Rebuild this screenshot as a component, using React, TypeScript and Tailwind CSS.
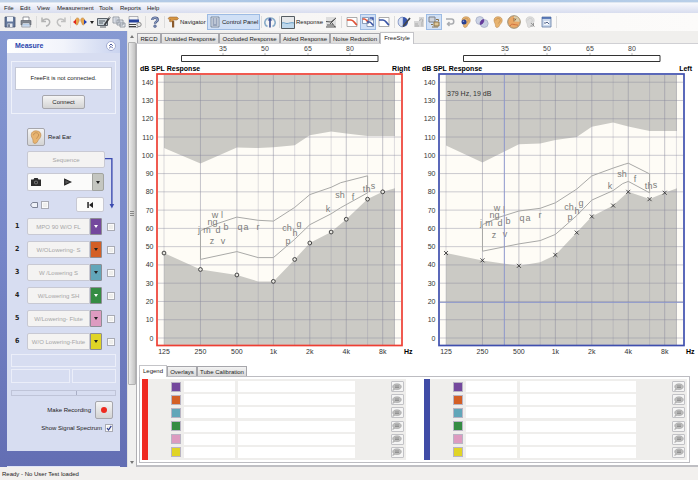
import type { ReactNode } from "react";

/* ---------- shared data ---------- */

const MENUS = [
  { name: "File", width: "w-4" },
  { name: "Edit", width: "w-[17px]" },
  { name: "View", width: "w-5" },
  { name: "Measurement", width: "w-[42px]" },
  { name: "Tools", width: "w-[21px]" },
  { name: "Reports", width: "w-[27px]" },
  { name: "Help", width: "w-5" },
];

const TESTS = [
  { name: "MPO 90 W/O FL", color: "bg-[#74489d]", light: true },
  { name: "W/OLowering- S", color: "bg-[#d35f26]", light: false },
  { name: "W /Lowering S", color: "bg-[#62a6b9]", light: false },
  { name: "W/Lowering SH", color: "bg-[#358c43]", light: true },
  { name: "W/Lowering- Flute", color: "bg-[#dd9bc0]", light: false },
  { name: "W/O Lowering-Flute", color: "bg-[#e0d426]", light: false },
];

/* ---------- toolbar ---------- */

function Tool({ label, children, active, width = "w-4" }: { label: string; children: ReactNode; active?: boolean; width?: string }) {
  return (
    <button
      aria-label={label}
      className={`${width} flex h-4 shrink-0 items-center justify-center border ${
        active ? "border-[#9dbbe3] bg-[#d0e0f6]" : "border-transparent"
      }`}
    >
      {children}
    </button>
  );
}

function Sep({ width = "w-1" }: { width?: string }) {
  return (
    <span className={`${width} flex h-3 shrink-0 justify-center`}>
      <span className="w-px bg-[#dcdcdc]" />
    </span>
  );
}

function Glyph({ children, wide }: { children: ReactNode; wide?: boolean }) {
  return (
    <svg viewBox={wide ? "0 0 14 12" : "0 0 12 12"} className={wide ? "h-3 w-3.5 shrink-0" : "h-3 w-3 shrink-0"} fill="none">
      {children}
    </svg>
  );
}

function EarShape({ fill = "#e8b470", stroke = "#b5834a" }: { fill?: string; stroke?: string }) {
  return (
    <>
      <path d="M2 5C1.6 1.8 4 .6 6.2.7 9 .8 10.5 2.5 10.2 5c-.3 2-1.8 2.8-2.6 4.3C7 10.7 6.3 11.5 5 11.5c-1.5 0-1.6-1.5-1.6-2.6C3.4 7.500 2.200 6.600 2 5Z" fill={fill} stroke={stroke} strokeWidth=".5" />
      <path d="M3.8 4.500C4 2.800 5.300 2.300 6.400 2.400c1.500.1 2.200 1.400 1.700 2.700-.4 1-1.300 1.300-1.700 2.400" stroke={stroke} strokeWidth=".6" />
    </>
  );
}

function Toolbar() {
  return (
    <div className="flex h-[18px] items-center bg-gradient-to-r from-[#f0efee] via-[#f8f7f6] to-[#fcfbfa] pl-0.5">
      <Tool label="Save">
        <Glyph>
          <path d="M1 1h9.500l.5.5V11H1Z" fill="#64789c" stroke="#46536e" strokeWidth=".8" />
          <path d="M3 1h6v4.500H3Z" fill="#eef2f8" />
          <path d="M3.500 7.500h5V11h-5Z" fill="#e6e9ef" />
          <path d="M4.300 8.300h1.400V11H4.300Z" fill="#46536e" />
        </Glyph>
      </Tool>
      <Tool label="Print">
        <Glyph>
          <path d="M3 1h6v4H3Z" fill="#fff" stroke="#6b6f76" strokeWidth=".7" />
          <path d="M1 4.500h10V9H1Z" fill="#7f858e" stroke="#585d66" strokeWidth=".6" />
          <path d="M2.500 7h7l.8 4H1.700Z" fill="#eef4fb" stroke="#6b7480" strokeWidth=".6" />
          <path d="M3 8.500h6M2.800 9.800h6.500" stroke="#8fb0d8" strokeWidth=".6" />
        </Glyph>
      </Tool>
      <Sep />
      <Tool label="Undo" width="w-[15px]">
        <Glyph>
          <path d="M2 1.500v4h4M2.300 5.200C4 2.500 8 2 9.400 4.600c1 2-.4 4.600-3.400 5.600" stroke="#b3b3b3" strokeWidth="1.500" />
        </Glyph>
      </Tool>
      <Tool label="Redo">
        <Glyph>
          <path d="M10 1.500v4H6M9.700 5.200C8 2.500 4 2 2.600 4.600c-1 2 .4 4.600 3.400 5.600" stroke="#c0c0c0" strokeWidth="1.500" />
        </Glyph>
      </Tool>
      <Sep width="w-[3px]" />
      <Tool label="Ears">
        <Glyph wide>
          <path d="M2.500 3.500C3.500 1 6.300 1.600 6.200 4c0 1.800-1 2.400-1.300 3.800C4.600 9.500 3 9.500 3 8c0-1.500-1-2.500-.5-4.500ZM11.500 3.500C10.500 1 7.700 1.600 7.800 4c0 1.800 1 2.400 1.300 3.800.3 1.700 1.900 1.700 1.900.2 0-1.500 1-2.500.5-4.500Z" fill="#e9a64e" stroke="#b57a32" strokeWidth=".5" />
          <path d="M0 6l3-2.500v5Z" fill="#e2261c" />
          <path d="M14 6l-3-2.500v5Z" fill="#2340b5" />
        </Glyph>
      </Tool>
      <Tool label="Ear choices" width="w-2">
        <svg viewBox="0 0 4 3" className="h-[3px] w-1"><path d="M0 0h4L2 3Z" fill="#222" /></svg>
      </Tool>
      <Tool label="Annotate" width="w-[15px]">
        <Glyph wide>
          <path d="M.5 2.500h10v7H.5Z" fill="#c9d2d8" stroke="#596169" />
          <path d="M2 5h6M2 7h4M3 11h6" stroke="#596169" />
          <path d="M13 1 7.500 9" stroke="#3b3d40" strokeWidth="1.700" />
          <path d="m13 1-1 1.500" stroke="#ddd" />
        </Glyph>
      </Tool>
      <Tool label="Copy">
        <Glyph wide>
          <path d="M1 1h6v6H1ZM5 4h6v5H5ZM8 7h5v4H8Z" fill="#e8ebf0" stroke="#848b96" strokeWidth=".8" />
          <path d="M2.500 3h3M2.500 5h2M6.500 6h3" stroke="#8791a5" strokeWidth=".7" />
        </Glyph>
      </Tool>
      <Tool label="Report">
        <Glyph wide>
          <path d="M1 .5h9v11H1Z" fill="#f4f4f4" stroke="#81858d" strokeWidth=".6" />
          <path d="M1 3.500h10v3H1Z" fill="#27439d" />
          <path d="M1 8.500h7M1 10.500h7" stroke="#444" />
          <circle cx="11" cy="8.500" r="2.200" fill="#e5e5e5" stroke="#777" strokeWidth=".8" />
        </Glyph>
      </Tool>
      <Sep />
      <Tool label="Help" width="w-[15px]">
        <Glyph>
          <path d="M3.200 3.900C3.200 1 8.800 1 8.800 3.900 8.800 5.500 6 5.400 6 7.700" stroke="#4f618c" strokeWidth="2.400" />
          <path d="M3.200 3.900C3.200 1 8.800 1 8.800 3.900 8.800 5.500 6 5.400 6 7.300" stroke="#a3b1d1" strokeWidth=".9" />
          <circle cx="6" cy="10.200" r="1.400" fill="#7485ac" stroke="#4f618c" strokeWidth=".5" />
        </Glyph>
      </Tool>
      <Sep width="w-[5px]" />
      <button className="flex h-4 w-[40px] shrink-0 items-center gap-px whitespace-nowrap text-[6px]">
        <Glyph>
          <path d="M5 5h2.200v6.500H5Z" fill="#8a5a2c" />
          <path d="M1 2.500 2.500 1H10l1.500 1.500L10 4H7l-3 2-2-1 2-1.300H2.500Z" fill="#d69643" stroke="#8a5a2c" strokeWidth=".5" />
        </Glyph>
        Navigator
      </button>
      <button className="flex h-4 w-[53px] shrink-0 items-center gap-px whitespace-nowrap border border-[#9dbbe3] bg-[#d0e0f6] pl-px text-[6px]">
        <Glyph>
          <path d="M2 1h8v10H2Z" fill="#dfe6ee" stroke="#68768b" strokeWidth=".8" />
          <path d="M3.500 3h2M6.500 3h2M3.500 5h2M6.500 5h2M3.500 7h2M6.500 7h2M3.500 9h5" stroke="#516387" />
        </Glyph>
        Control Panel
      </button>
      <Sep width="w-[2px]" />
      <Tool label="Transducer">
        <Glyph>
          <path d="M3.500 10.500C-1 8.500.5 2 6 2s7 6.500 2.500 8.500" stroke="#8badc9" strokeWidth="1.600" />
          <path d="M6 11.500V3" stroke="#374d91" strokeWidth="1.600" />
          <path d="M3.700 4.500 6 1.600l2.300 2.900Z" fill="#374d91" />
        </Glyph>
      </Tool>
      <Sep width="w-[3px]" />
      <button className="flex h-4 w-[42px] shrink-0 items-center gap-px whitespace-nowrap text-[6px]">
        <svg viewBox="0 0 14 13" className="h-[13px] w-3.5 shrink-0" fill="none">
          <path d="M.5.5h13v12H.5Z" fill="#e6e8ea" stroke="#555d63" />
          <path d="M1 7c2-1 3 .5 5 .5S10 6 13 7v5H1Z" fill="#bed8ec" />
          <path d="M1 7c2-1 3 .5 5 .5S10 6 13 7" stroke="#659cc6" />
        </svg>
        Response
      </button>
      <Tool label="Speech" width="w-[15px]">
        <Glyph>
          <path d="M1 1h10v10H1Z" fill="#dedede" />
          <path d="M1 5.500 6 6l5-4M2 9h6M5 8l5-5M7 7l3 4M1 11h10" stroke="#555" />
        </Glyph>
      </Tool>
      <Sep width="w-[6px]" />
      <Tool label="Right curve">
        <Glyph>
          <path d="M1 1.500h10v9H1Z" fill="#fff" stroke="#999" strokeWidth=".8" />
          <path d="M1 4h4c3 0 3 3 6 5" stroke="#df5135" strokeWidth="1.700" />
        </Glyph>
      </Tool>
      <Tool label="Both curves" active>
        <Glyph>
          <path d="M.5 1.500h6v6h-6ZM5 4h6.500v6.500H5Z" fill="#fff" stroke="#667da0" strokeWidth=".7" />
          <path d="M.5 3h2c1.500 0 2 2 4 3" stroke="#df5135" strokeWidth="1.400" />
          <path d="M5 6h2.500c1.500 0 2 2 4 3.500M7.500 2h3.500v2" stroke="#3853a5" strokeWidth="1.400" />
        </Glyph>
      </Tool>
      <Tool label="Left curve">
        <Glyph>
          <path d="M1 1.500h10v9H1Z" fill="#fff" stroke="#999" strokeWidth=".8" />
          <path d="M1 4h4c3 0 3 3 6 5" stroke="#3853a5" strokeWidth="1.700" />
        </Glyph>
      </Tool>
      <Sep />
      <Tool label="Edit curve">
        <Glyph wide>
          <circle cx="6" cy="6" r="5" fill="#3654ab" />
          <path d="M6 1a5 5 0 0 0 0 10Z" fill="#d7e0f2" stroke="#5870aa" strokeWidth=".5" />
          <path d="M13 2 6 10.500" stroke="#43464a" strokeWidth="1.700" />
        </Glyph>
      </Tool>
      <Tool label="Patient" width="w-[14px]">
        <Glyph>
          <path d="M1 5h5V1h5v10H1Z" fill="#d6d6d6" />
          <path d="M6.500 5c1.500-4 4.500-1.500 2.500 1v4.500M2 8h3M2 10h4" stroke="#adadad" />
        </Glyph>
      </Tool>
      <Tool label="Linked view" active>
        <Glyph>
          <path d="M1 1h6v5H1Z" fill="#cfd3da" stroke="#7d828c" />
          <path d="M6 6h5v4H6Z" fill="#dfc798" stroke="#8b744b" />
          <path d="M3 8.500h2M8 3.500h2.500V5M4 11h6" stroke="#8b744b" />
        </Glyph>
      </Tool>
      <Tool label="Return">
        <Glyph>
          <path d="M2 3h5.500c3 0 3 5 0 5H4M5.500 6 3.500 8l2 2" stroke="#aaacb0" strokeWidth="1.500" />
        </Glyph>
      </Tool>
      <Tool label="Ear probe">
        <Glyph>
          <EarShape />
          <circle cx="4" cy="6" r="2.500" fill="#283f91" />
          <circle cx="3.500" cy="5.300" r=".8" fill="#8d9ed8" />
        </Glyph>
      </Tool>
      <Tool label="Overlap">
        <Glyph wide>
          <circle cx="4.800" cy="4.500" r="4" fill="#ccd3e5" stroke="#9aa3bd" strokeWidth=".6" />
          <circle cx="9.200" cy="7.500" r="4" fill="#c6cde1" stroke="#9aa3bd" strokeWidth=".6" />
          <path d="M5.300 8.400A4 4 0 0 1 8.700 3.600 4 4 0 0 1 5.300 8.400Z" fill="#65399b" stroke="#65399b" />
        </Glyph>
      </Tool>
      <Tool label="Real ear"><Glyph><EarShape /></Glyph></Tool>
      <Tool label="Face">
        <svg viewBox="0 0 14 14" className="h-3.5 w-3.5 shrink-0" fill="none">
          <circle cx="7" cy="7" r="6.300" fill="#e9a866" stroke="#9a9078" />
          <path d="M7 1.200c4 0 5.500 3 5.700 5.500L7 6.500Z" fill="#d9cfae" />
          <path d="M3 11c1-2 2-2 4-1.500s3 0 4 1" stroke="#d0703f" />
          <path d="M7 3v3.500M9 3.500l-1 2" stroke="#9a6b3c" />
        </svg>
      </Tool>
      <Tool label="Coupler">
        <Glyph>
          <EarShape fill="#dedede" stroke="#c2c2c2" />
          <path d="m7 7 3.500 3.500M9.500 7v3H6.500" stroke="#8c8c8c" strokeWidth=".9" />
        </Glyph>
      </Tool>
      <Tool label="Settings">
        <Glyph>
          <path d="M2 1h9v10H2Z" fill="#cbd9ec" stroke="#637ba5" strokeWidth=".8" />
          <path d="M2 2h9" stroke="#3c5fa8" strokeWidth="1.500" />
          <path d="M4 5h5v4H4Z" fill="#f3f6fb" />
          <path d="M4 7h2l1-1 2 2" stroke="#52658b" />
        </Glyph>
      </Tool>
      <Sep />
    </div>
  );
}

/* ---------- side panel ---------- */

const raised = "rounded-[2px] border border-[#a6a6ac] bg-gradient-to-b from-[#f5f5f5] to-[#d4d4d4]";
const flat = "border border-[#c8c9d3] bg-[#f4f3f2]";

function Check({ label, checked }: { label: string; checked?: boolean }) {
  return (
    <input
      type="checkbox"
      aria-label={label}
      defaultChecked={checked}
      className="h-2 w-2 shrink-0 appearance-none border border-[#a9abb4] bg-[#eeeeec] shadow-[inset_0_0_0_1px_#fafafa]"
    />
  );
}

function SidePanel() {
  return (
    <aside className="flex w-[127px] shrink-0 flex-col bg-gradient-to-b from-[#8699d2] via-[#7686c8] to-[#636eb3] pl-[7px] pr-[7px] pt-2">
      <header className="flex h-[14px] items-center justify-between rounded-t-[2px] bg-gradient-to-r from-white via-[#f2f4fb] to-[#c9d3ef] pl-2 pr-1">
        <h1 className="text-[7px] font-bold text-[#2a44ac]">Measure</h1>
        <button aria-label="Collapse">
          <svg viewBox="0 0 10 10" className="h-2.5 w-2.5" fill="none">
            <circle cx="5" cy="5" r="4.500" fill="#fff" stroke="#a4add2" />
            <path d="m3.200 4.800 1.800-1.800 1.800 1.800M3.200 7.200 5 5.400l1.800 1.800" stroke="#34458e" strokeWidth=".9" />
          </svg>
        </button>
      </header>
      <div className="flex h-[398px] flex-col bg-[#d7ddf1] px-1 pt-2">
        <section className="flex h-[53px] flex-col items-center border border-[#eef1fa] px-[3px] pt-[5px]">
          <p className="flex h-[23px] w-full items-center justify-center whitespace-nowrap border border-[#c4c8d6] bg-white text-[6px]">
            FreeFit is not connected.
          </p>
          <button className={`${raised} mt-[5px] h-[14px] w-[43px] text-[6px] leading-none`}>Connect</button>
        </section>

        <div className="mt-[14px] flex items-center gap-[3px] pl-4">
          <button aria-label="Ear type" className={`${raised} flex h-[18px] w-[18px] items-center justify-center`}>
            <svg viewBox="0 0 12 12" className="h-3.5 w-3.5" fill="none"><EarShape /></svg>
          </button>
          <span className="text-[6px]">Real Ear</span>
        </div>

        <div className="mt-[5px] flex pl-4">
          <div className="w-[78px] shrink-0">
            <button className={`${flat} h-[17px] w-full rounded-[2px] text-[6px] leading-none text-[#a6a6a6]`}>Sequence</button>
            <div className="mt-[5px] flex h-[18px] w-[77px]">
              <button aria-label="Snapshot" className="flex w-4 items-center justify-center rounded-l-[2px] border-y border-l border-[#c8c9d3] bg-[#fbfbfa]">
                <svg viewBox="0 0 10 8" className="h-2 w-2.5">
                  <path d="M0 1.500h2.500L3.300 0h3.400l.8 1.500H10V8H0Z" fill="#2c2c2c" />
                  <circle cx="5" cy="4.500" r="2" fill="#777" /><circle cx="5" cy="4.500" r="1" fill="#222" />
                </svg>
              </button>
              <button aria-label="Play" className="flex flex-1 items-center justify-center border-y border-[#c8c9d3] bg-[#fbfbfa]">
                <svg viewBox="0 0 8 8" className="h-2 w-2"><path d="M.7 1.200 6.800 4 .7 6.800Z" fill="#555" stroke="#222" strokeWidth="1.200" /></svg>
              </button>
              <button aria-label="Play choices" className="flex w-3 items-center justify-center rounded-r-[2px] border border-[#a2a49f] bg-[#c4c6c0]">
                <svg viewBox="0 0 4 3" className="h-[3px] w-1"><path d="M0 0h4L2 3Z" fill="#222" /></svg>
              </button>
            </div>
            <div className="mt-[6px] flex h-[15px] items-center pl-[3px]">
              <svg viewBox="0 0 8 6" className="mr-[3px] h-1.5 w-2" fill="none">
                <path d="M2.500.5h5v5h-5L.5 3Z" fill="#edf0f7" stroke="#70768a" strokeWidth=".9" />
              </svg>
              <Check label="Tag" />
              <button aria-label="Back to start" className="ml-auto mr-[1px] flex h-[15px] w-[28px] items-center justify-center rounded-[2px] border border-[#c8c9d3] bg-[#fbfbfa]">
                <svg viewBox="0 0 6 6" className="h-1.5 w-1.5"><path d="M.3 0h1.500v6H.3ZM6 0v6L2 3Z" fill="#222" /></svg>
              </button>
            </div>
          </div>
          <svg viewBox="0 0 12 61" className="h-[61px] w-3" fill="none">
            <path d="M0 5.500h7.500v51" stroke="#3b4bb0" strokeWidth="1.500" />
            <path d="M5 55h5l-2.500 5Z" fill="#3b4bb0" />
          </svg>
        </div>

        <ol className="mt-[6px] flex flex-col gap-[6px]">
          {TESTS.map((t, i) => (
            <li key={t.name} className="flex h-[17px] items-center">
              <b className="w-4 pl-[4px] font-['DejaVu_Sans_Condensed','DejaVu_Sans',sans-serif] text-[7px]">{i + 1}</b>
              <button className={`${flat} h-full w-[63px] whitespace-nowrap rounded-l-[2px] text-center text-[6px] leading-none text-[#a6a6a6]`}>
                {t.name}
              </button>
              <button aria-label={`${t.name} choices`} className={`${t.color} flex h-full w-3 items-center justify-center rounded-r-[1px] border border-[#8d8d94]`}>
                <svg viewBox="0 0 4 3" className="h-[3px] w-1"><path d="M0 0h4L2 3Z" fill={t.light ? "#fff" : "#222"} /></svg>
              </button>
              <span className="ml-[5px] flex"><Check label={`Show ${t.name}`} /></span>
            </li>
          ))}
        </ol>

        <div className="mt-1 h-[13px] border border-[#ebeef9]" />
        <div className="mt-[2px] flex h-[14px] gap-[2px]">
          <div className="w-[59px] border border-[#ebeef9]" />
          <div className="flex-1 border border-[#ebeef9]" />
        </div>
        <div className="mt-[7px] flex h-[6px] border border-[#bfc4d8]">
          <div className="w-[65px] border-r border-[#a9aec6]" />
        </div>
        <div className="mt-[5px] flex h-[18px] items-center justify-end gap-1 pr-[3px]">
          <span className="text-[6px]">Make Recording</span>
          <button aria-label="Make recording" className={`${raised} flex h-[18px] w-[18px] items-center justify-center`}>
            <span className="h-[6px] w-[6px] rounded-full bg-[#ee2a1e]" />
          </button>
        </div>
        <label className="mt-[3px] flex h-[12px] items-center justify-end gap-[3px] whitespace-nowrap pr-[3px] text-[6px]">
          Show Signal Spectrum
          <span className="relative flex">
            <Check label="Show Signal Spectrum" checked />
            <svg viewBox="0 0 8 8" className="absolute inset-0 h-2 w-2" fill="none">
              <path d="m2 4 1.500 2L6.300 1.800" stroke="#2b3a8c" strokeWidth="1.200" />
            </svg>
          </span>
        </label>
      </div>
      <div className="mt-auto h-px bg-[#dfe4f5]" />
    </aside>
  );
}

function ScrollBar() {
  return (
    <div className="flex w-[9px] shrink-0 flex-col items-center border-l border-[#e2e2e2] bg-[#f0f0ef]">
      <button aria-label="Scroll up" className="flex h-[11px] items-center">
        <svg viewBox="0 0 4 3" className="h-[3px] w-1"><path d="M0 3h4L2 0Z" fill="#777" /></svg>
      </button>
      <div className="flex h-[343px] w-[8px] flex-col items-center justify-center gap-px rounded-[1px] border border-[#b2b2b2] bg-gradient-to-r from-[#ececec] to-[#c4c4c4]">
        <span className="h-px w-1 bg-[#888]" />
        <span className="h-px w-1 bg-[#888]" />
        <span className="h-px w-1 bg-[#888]" />
      </div>
      <button aria-label="Scroll down" className="mt-auto flex h-[9px] items-center">
        <svg viewBox="0 0 4 3" className="h-[3px] w-1"><path d="M0 0h4L2 3Z" fill="#777" /></svg>
      </button>
    </div>
  );
}

/* ---------- response charts ---------- */

type Point = [hz: number, db: number];
type Letter = [text: string, x: number, y: number];

const px = (hz: number) => 26 + Math.log2(hz / 125) * 36.45;
const py = (db: number) => 338 - db * 1.827;
const path = (pts: Point[]) => pts.map(([h, d]) => `${px(h).toFixed(1)},${py(d).toFixed(1)}`).join(" ");

const MAJOR: [number, string][] = [
  [125, "125"], [250, "250"], [500, "500"], [1000, "1k"], [2000, "2k"], [4000, "4k"], [8000, "8k"],
];
const MINOR = [750, 1500, 3000, 6000, 10000];
const LEVELS = [0, 10, 20, 30, 40, 50, 60, 70, 80, 90, 100, 110, 120, 130, 140];
const END = 10100;

interface Ear {
  side: "Right" | "Left";
  color: string;
  ceiling: Point[];
  threshold: Point[];
  speech: Point[];
  letters: Letter[];
}

const RIGHT: Ear = {
  side: "Right",
  color: "#ee3e33",
  ceiling: [[125, 104], [250, 95.5], [500, 104.3], [750, 104], [1000, 104.4], [1500, 105.5], [2000, 111], [3000, 113], [4000, 112], [6000, 110.5], [END, 110.5]],
  threshold: [[125, 46.5], [250, 37.5], [500, 34.5], [750, 31], [1000, 31], [1500, 43], [2000, 52], [3000, 58], [4000, 65], [6000, 76], [8000, 80], [END, 82]],
  speech: [[250, 43], [250, 58.8], [340, 62.5], [500, 66.2], [750, 64.4], [1000, 64], [1500, 71.5], [2000, 78.5], [3000, 82.5], [3600, 85], [6000, 88.8], [6000, 79.5], [3600, 71.3], [3000, 68], [2000, 62], [1500, 54], [1000, 44], [750, 44], [500, 47.3], [250, 43]],
  letters: [["j", 60, 232], ["m", 68, 232], ["n", 71, 224], ["g", 76, 224], ["w", 76, 217], ["l", 83, 217], ["d", 79, 232], ["b", 87, 229], ["q", 101, 229], ["a", 107, 229], ["r", 119, 229], ["z", 73, 243], ["v", 84, 243], ["ch", 148, 230], ["g", 160, 226], ["h", 156, 235], ["p", 149, 243], ["k", 189, 211], ["sh", 201, 197], ["f", 214, 199], ["t", 225, 191], ["h", 229, 191], ["s", 234, 188]],
};

const LEFT: Ear = {
  side: "Left",
  color: "#3f4fae",
  ceiling: [[125, 105.3], [250, 96], [500, 106], [750, 106.5], [1000, 108.3], [1500, 110], [2000, 115.6], [3000, 118], [4000, 115.8], [6000, 113.3], [END, 113.3]],
  threshold: [[125, 46.5], [250, 42.5], [500, 39.5], [750, 41.5], [1000, 45.5], [1500, 57.7], [2000, 66.5], [3000, 72.5], [4000, 80], [6000, 76], [8000, 79.5], [END, 82]],
  speech: [[250, 47.5], [250, 62], [340, 66], [500, 69.5], [750, 71], [1000, 74], [1500, 81.5], [2000, 88.7], [3000, 93], [3700, 95], [4000, 95.7], [6000, 89.8], [6000, 79.5], [4000, 85.7], [3600, 84.5], [3000, 80.7], [2000, 75.5], [1500, 67], [1000, 56.7], [750, 53.3], [500, 51.5], [250, 47.5]],
  letters: [["j", 60, 225], ["m", 68, 225], ["n", 71, 217], ["g", 76, 217], ["w", 76, 210], ["l", 83, 212], ["d", 79, 225], ["b", 87, 223], ["q", 101, 220], ["a", 107, 220], ["r", 119, 217], ["z", 73, 237], ["v", 84, 236], ["ch", 148, 209], ["g", 160, 205], ["h", 156, 213], ["p", 149, 219], ["k", 189, 188], ["sh", 201, 176], ["f", 214, 181], ["t", 225, 188], ["h", 229, 188], ["s", 234, 187]],
};

function Chart({ ear, cursor }: { ear: Ear; cursor?: { hz: number; db: number; text: string } }) {
  const end = px(END);
  return (
    <svg viewBox="0 44 276 319" className="h-auto w-full font-['Liberation_Sans',sans-serif]" role="img" aria-label={`${ear.side} response`}>
      {([["35", 85], ["50", 127], ["65", 170], ["80", 212]] as [string, number][]).map(([t, x]) => (
        <g key={t}>
          <text x={x} y="51" textAnchor="middle" className="text-[7px]" fill="#444">{t}</text>
          <path d={`M${x} 53v2`} stroke="#bbb" />
        </g>
      ))}
      <path d="M43.500 55.500H240v6H43.500Z" fill="#fff" stroke="#333" />
      <text x="2" y="71" className="text-[7px] font-bold">dB SPL Response</text>
      <text x="272" y="71" textAnchor="end" className="text-[7px] font-bold">{ear.side}</text>

      <rect x="19" y="74" width="245" height="271.500" fill="#fefcf6" />
      <polygon points={`26,75 ${path(ear.ceiling)} ${end},75`} fill="#cbcac5" />
      <polygon points={`26,345 ${path(ear.threshold)} ${end},345`} fill="#cbcac5" />

      {LEVELS.map((d) => (
        <path key={d} d={`M20 ${py(d)}h243`} stroke="#85859a" strokeOpacity=".42" />
      ))}
      {MAJOR.map(([h]) => (
        <path key={h} d={`M${px(h)} 75v270`} stroke="#85859a" strokeOpacity={h === 125 ? ".3" : ".48"} />
      ))}
      {MINOR.map((h) => (
        <path key={h} d={`M${px(h)} 75v270`} stroke="#85859a" strokeOpacity=".26" />
      ))}

      <polyline points={path(ear.speech)} fill="none" stroke="#a9a9a7" />
      {ear.letters.map(([t, x, y], i) => (
        <text key={i} x={x + 1} y={y + 1} textAnchor="middle" className="text-[9px]" fill="#7d7d7b">{t}</text>
      ))}

      {ear.threshold.filter(([h]) => h !== 750 && h !== END).map(([h, d]) =>
        ear.side === "Right" ? (
          <circle key={h} cx={px(h)} cy={py(d)} r="1.900" fill="#e6e5e0" stroke="#333" strokeWidth=".9" />
        ) : (
          <path key={h} d={`M${px(h) - 2} ${py(d) - 2}l4 4m0-4l-4 4`} stroke="#222" strokeWidth=".8" />
        ),
      )}

      {cursor && (
        <>
          <path d={`M${px(cursor.hz)} 75v270M20 ${py(cursor.db)}h243`} stroke="#8d97cc" />
          <text x="27" y="96" className="text-[7px]" fill="#333">{cursor.text}</text>
        </>
      )}
      <rect x="19" y="74" width="245" height="271.500" fill="none" stroke={ear.color} strokeWidth="1.700" />

      {LEVELS.map((d) => (
        <text key={d} x="15.500" y={py(d) + 2.5} textAnchor="end" className="text-[7px]" fill="#333">{d}</text>
      ))}
      {MAJOR.map(([h, t]) => (
        <text key={h} x={px(h)} y="354" textAnchor="middle" className="text-[7px]" fill="#333">{t}</text>
      ))}
      <text x="266" y="354" className="text-[7px] font-bold">Hz</text>
    </svg>
  );
}

/* ---------- tabs and legend ---------- */

function Tab({ children, active, width }: { children: ReactNode; active?: boolean; width: string }) {
  return (
    <button
      className={`${width} shrink-0 whitespace-nowrap border-x border-t text-center text-[6px] leading-none ${
        active ? "z-10 -mb-px h-[12px] border-[#c4c4c8] bg-white pb-px" : "h-[10px] border-[#a6a6ab] bg-gradient-to-b from-[#f3f3f3] to-[#d9d9d9]"
      }`}
    >
      {children}
    </button>
  );
}

function LegendSide({ bar, side }: { bar: string; side: string }) {
  return (
    <div className="flex flex-1">
      <div className={`w-[6px] ${bar}`} />
      <ul className="flex flex-1 flex-col justify-between bg-[#efeeec] py-[2px] pl-[23px] pr-[2px]">
        {TESTS.map((t, i) => (
          <li key={t.name} className="flex h-[11px] items-center gap-[3px]">
            <span className={`h-[10px] w-[10px] border border-[#b9b4c4] ${t.color}`} />
            <input aria-label={`${side} ${i + 1} type`} className="h-[11px] w-[51px] bg-white px-1 text-[7px]" />
            <input aria-label={`${side} ${i + 1} level`} className="h-[11px] w-[60px] flex-1 bg-white px-1 text-[7px]" />
            <button aria-label={`${side} ${i + 1} comment`} className="ml-[33px] flex h-[11px] w-[13px] items-center justify-center rounded-[1px] border border-[#c2c2c6] bg-[#f5f5f5]">
              <svg viewBox="0 0 10 8" className="h-2 w-2.5 shrink-0" fill="none">
                <path d="M5 .8c2.500 0 4.300 1.200 4.300 2.900S7.500 6.600 5 6.600c-.8 0-1.400-.1-2-.3L.7 7.500l.9-2C1 5 .7 4.400.7 3.700.7 2 2.500.8 5 .8Z" fill="#bdbdbd" stroke="#a2a2a2" strokeWidth=".6" />
                <path d="M3 3h4M3 4.500h4" stroke="#868686" strokeWidth=".8" />
              </svg>
            </button>
          </li>
        ))}
      </ul>
    </div>
  );
}

export default function App() {
  return (
    <div className="flex min-h-screen flex-col bg-[#f0efed] font-['Liberation_Sans',Arial,sans-serif] text-[7px] text-[#222]">
      <div className="h-[3px] border-b border-[#dfe7f1] bg-gradient-to-r from-[#c3d3e8] via-[#a3c2e4] to-[#b9cfe8]" />
      <nav className="flex h-[10px] items-center bg-gradient-to-b from-[#f8f9fd] to-[#d8ddef] pl-1">
        {MENUS.map((m) => (
          <button key={m.name} className={`${m.width} shrink-0 text-left text-[6px] leading-none`}>{m.name}</button>
        ))}
      </nav>
      <Toolbar />

      <div className="flex flex-1 items-stretch">
        <SidePanel />
        <ScrollBar />
        <main className="flex min-w-0 flex-1 flex-col">
          <div className="flex h-[12px] items-end pl-px">
            <Tab width="w-6">RECD</Tab>
            <Tab width="w-[58px]">Unaided Response</Tab>
            <Tab width="w-[61px]">Occluded Response</Tab>
            <Tab width="w-[50px]">Aided Response</Tab>
            <Tab width="w-[50px]">Noise Reduction</Tab>
            <Tab width="w-[34px]" active>FreeStyle</Tab>
          </div>
          <div className="flex flex-1 flex-col border-b-2 border-l border-t border-b-[#bfbfc3] border-l-[#b0b0b4] border-t-[#d0d0d4] bg-white pb-[2px]">
            <div className="grid grid-cols-2 gap-[6px] pl-px pr-[2px]">
              <Chart ear={RIGHT} />
              <Chart ear={LEFT} cursor={{ hz: 379, db: 19.5, text: "379 Hz, 19 dB" }} />
            </div>
            <div className="mt-[1px] flex h-[12px] items-end pl-[2px]">
              <Tab width="w-[28px]" active>Legend</Tab>
              <Tab width="w-[30px]">Overlays</Tab>
              <Tab width="w-[50px]">Tube Calibration</Tab>
            </div>
            <div className="ml-[2px] mr-[8px] flex h-[87px] gap-[18px] border border-[#bcbcc1] p-[2px]">
              <LegendSide bar="bg-[#ef2a21]" side="Right" />
              <LegendSide bar="bg-[#404ca6]" side="Left" />
            </div>
          </div>
        </main>
      </div>

      <footer className="flex h-[14px] items-center bg-[#f2f0ee] pl-[2px] text-[6px]">Ready - No User Test loaded</footer>
    </div>
  );
}
